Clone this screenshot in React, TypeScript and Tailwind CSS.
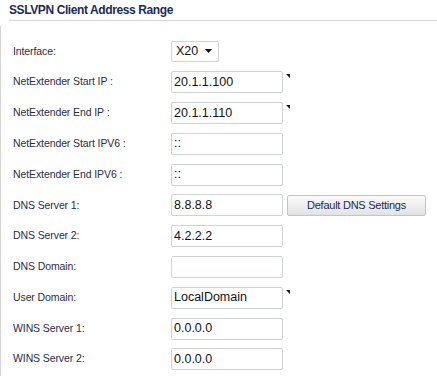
import React from "react";

type Row = {
  label: string;
  kind: "select" | "input";
  value?: string;
  marker?: boolean;
  button?: string;
};

const rows: Row[] = [
  { label: "Interface:", kind: "select", value: "X20" },
  { label: "NetExtender Start IP :", kind: "input", value: "20.1.1.100", marker: true },
  { label: "NetExtender End IP :", kind: "input", value: "20.1.1.110", marker: true },
  { label: "NetExtender Start IPV6 :", kind: "input", value: "::" },
  { label: "NetExtender End IPV6 :", kind: "input", value: "::" },
  { label: "DNS Server 1:", kind: "input", value: "8.8.8.8", button: "Default DNS Settings" },
  { label: "DNS Server 2:", kind: "input", value: "4.2.2.2" },
  { label: "DNS Domain:", kind: "input", value: "" },
  { label: "User Domain:", kind: "input", value: "LocalDomain", marker: true },
  { label: "WINS Server 1:", kind: "input", value: "0.0.0.0" },
  { label: "WINS Server 2:", kind: "input", value: "0.0.0.0" },
];

function Marker() {
  return (
    <svg width="5" height="5" viewBox="0 0 5 5" className="self-start mt-[3px] ml-[3px]">
      <polygon points="0,0 4,0 4,4" fill="#111" />
    </svg>
  );
}

export default function App() {
  return (
    <div
      className="w-[437px] h-[376px] bg-white overflow-hidden text-[#26283a]"
      style={{ fontFamily: '"Liberation Sans", Arial, sans-serif' }}
    >
      <div className="ml-[9px] h-[21px] border-b border-[#d6d6d6] flex items-end pb-[4px]">
        <span className="text-[12px] font-bold text-[#1c2a55] leading-none tracking-[-0.4px]">
          SSLVPN Client Address Range
        </span>
      </div>
      <div className="mt-[5px] border-l border-[#d4d4d4] h-[350px] pt-[10px]">
        {rows.map((r) => (
          <div key={r.label} className="h-[30.8px] flex items-center">
            <div className="w-[170px] pl-[12px] text-[10.5px] tracking-[-0.1px] text-[#2a2c44]">
              {r.label}
            </div>
            {r.kind === "select" ? (
              <div className="w-[48px] h-[21px] border border-[#cfd3d8] rounded-[2px] flex items-center pl-[4px] pr-[6px] justify-between text-[12.5px] text-[#111]">
                <span>{r.value}</span>
                <svg width="7" height="4" viewBox="0 0 7 4">
                  <polygon points="0,0 7,0 3.5,4" fill="#111" />
                </svg>
              </div>
            ) : (
              <div className="flex items-center h-[22px]">
                <div className="w-[112px] h-[22px] border border-[#cfd3d8] rounded-[2px] flex items-center pl-[2px] text-[12.5px] text-[#111]">
                  {r.value}
                </div>
                {r.marker && <Marker />}
                {r.button && (
                  <div className="ml-[4px] w-[139px] h-[21px] border border-[#c4c4c4] rounded-[2px] bg-gradient-to-b from-[#fbfbfb] to-[#e2e2e2] flex items-center justify-center text-[11px] tracking-[-0.25px] text-[#1c2a55]">
                    {r.button}
                  </div>
                )}
              </div>
            )}
          </div>
        ))}
      </div>
    </div>
  );
}
